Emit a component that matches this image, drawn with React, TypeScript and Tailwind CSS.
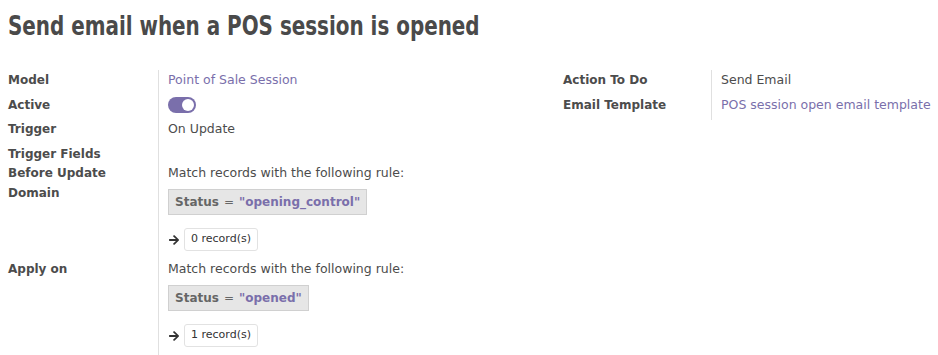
import React from "react";

const body = { fontFamily: '"DejaVu Sans", "Liberation Sans", sans-serif' };

function Arrow() {
  return (
    <svg width="10" height="10" viewBox="0 0 448 448" className="text-[#333]">
      <path
        fill="currentColor"
        d="M190.5 34.9l22.2-22.2c9.4-9.4 24.6-9.4 33.9 0L441 207c9.4 9.4 9.4 24.6 0 33.9L246.6 435.3c-9.4 9.4-24.6 9.4-33.9 0l-22.2-22.2c-9.5-9.5-9.3-25 .4-34.3L311.4 264H24c-13.3 0-24-10.7-24-24v-32c0-13.3 10.7-24 24-24h287.4L190.9 69.2c-9.8-9.3-10-24.8-.4-34.3z"
      />
    </svg>
  );
}

function DomainBlock({ value, count }: { value: string; count: string }) {
  return (
    <div className="flex flex-col">
      <div className="leading-[20px]">Match records with the following rule:</div>
      <div className="mt-[6px] flex">
        <div className="h-[26px] flex items-center border border-[#d0d0d0] bg-[#e6e6e6] px-[6px] text-[12px]">
          <span className="font-bold text-[#666]">Status</span>
          <span className="mx-[5px] text-[#666]">=</span>
          <span className="font-bold text-[#7a6fab]">"{value}"</span>
        </div>
      </div>
      <div className="mt-[13px] flex items-center gap-[5px] h-[23px] pl-[1px]">
        <Arrow />
        <div className="h-[23px] flex items-center rounded-[3px] border border-[#e2e2e2] bg-white px-[6px] text-[11px] text-[#333]">
          {count}
        </div>
      </div>
    </div>
  );
}

function Row({
  label,
  children,
  h,
  lw = "w-[150px]",
}: {
  label: React.ReactNode;
  children?: React.ReactNode;
  h?: string;
  lw?: string;
}) {
  return (
    <div className={`flex ${h ?? ""}`}>
      <div className={`${lw} shrink-0 font-bold text-[12px] leading-[20px] text-[#4c4c4c]`}>{label}</div>
      <div className="border-l border-[#e0e0e0] pl-[9px] flex-1">{children}</div>
    </div>
  );
}

export default function App() {
  return (
    <div className="w-[938px] h-[355px] bg-white text-[12.5px] text-[#4c4c4c] overflow-hidden" style={body}>
      <div className="pl-[8px] pt-[9px] h-[70px]">
        <h1
          className="inline-block origin-left scale-x-[0.82] text-[27px] font-bold text-[#4a4a4a] leading-[34px] whitespace-nowrap"
          style={{ fontFamily: '"DejaVu Sans Condensed", "DejaVu Sans", sans-serif' }}
        >
          Send email when a POS session is opened
        </h1>
      </div>
      <div className="flex pl-[8px]">
        <div className="w-[555px] flex flex-col">
          <Row label="Model" h="h-[25px]">
            <div className="leading-[20px] text-[#7a6fab]">Point of Sale Session</div>
          </Row>
          <Row label="Active" h="h-[24px]">
            <div className="h-[20px] flex items-center">
              <div className="w-[28px] h-[16px] rounded-full bg-[#7a6fab] flex items-center justify-end pr-[2px]">
                <div className="w-[12px] h-[12px] rounded-full bg-white" />
              </div>
            </div>
          </Row>
          <Row label="Trigger" h="h-[25px]">
            <div className="leading-[20px]">On Update</div>
          </Row>
          <Row label="Trigger Fields" h="h-[19px]" />
          <Row
            label={
              <>
                Before Update
                <br />
                Domain
              </>
            }
            h="h-[96px]"
          >
            <DomainBlock value="opening_control" count="0 record(s)" />
          </Row>
          <Row label="Apply on" h="h-[100px]">
            <DomainBlock value="opened" count="1 record(s)" />
          </Row>
        </div>
        <div className="flex flex-col w-[375px]">
          <Row label="Action To Do" h="h-[25px]" lw="w-[148px]">
            <div className="leading-[20px]">Send Email</div>
          </Row>
          <Row label="Email Template" h="h-[25px]" lw="w-[148px]">
            <div className="leading-[20px] text-[#7a6fab] whitespace-nowrap">POS session open email template</div>
          </Row>
        </div>
      </div>
    </div>
  );
}
